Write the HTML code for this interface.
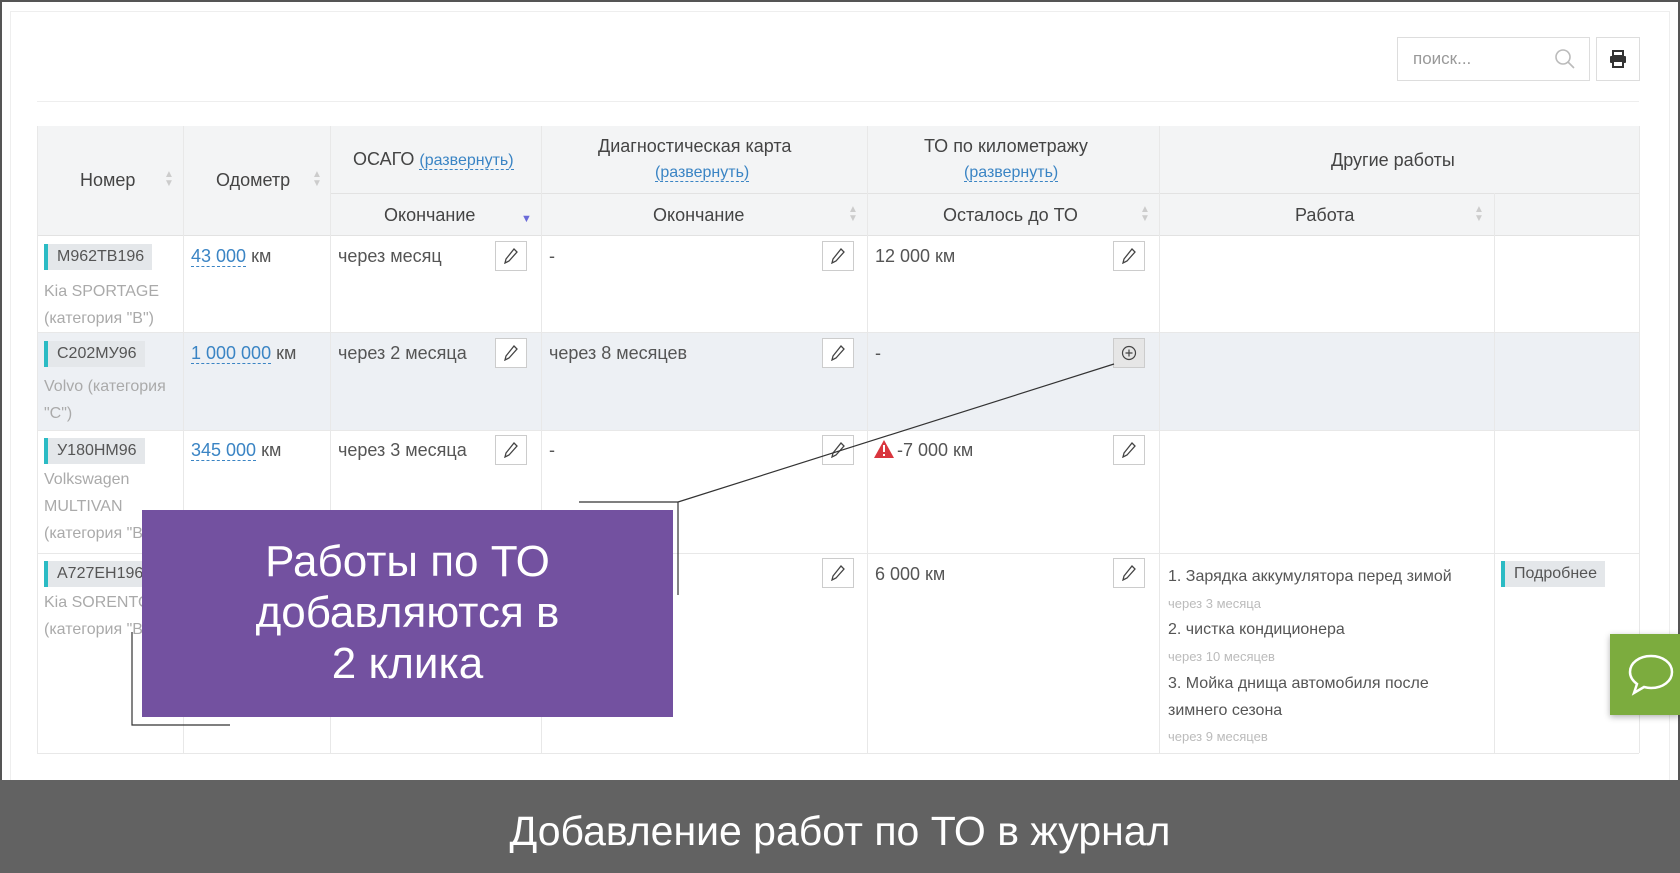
<!DOCTYPE html>
<html><head><meta charset="utf-8"><style>
*{margin:0;padding:0;box-sizing:border-box}
body{width:1680px;height:873px;position:relative;overflow:hidden;background:#fff;font-family:"Liberation Sans","DejaVu Sans",sans-serif;color:#555}
.a{position:absolute}
.frame{left:0;top:0;width:1680px;height:873px;border:2px solid #555;border-bottom:none}
.inner{left:10px;top:11px;width:1660px;height:770px;border:1px solid #eee}
.t{font-size:18px;white-space:nowrap}
.hd{background:#f3f4f5}
.vl{width:1px;background:#e8e8e8}
.hl{height:1px;background:#e8e8e8}
.lnk{color:#3a84c4;border-bottom:1px dashed #3a84c4}
.btn{width:32px;height:30px;border:1px solid #ccc;background:#fff;display:flex;align-items:center;justify-content:center}
.plate{height:26px;background:#e4e7ea;border-left:4px solid #2bbbc4;padding:0 8px 0 9px;line-height:26px;font-size:16px;color:#555}
.gr{color:#aaa;font-size:16px}
.sort{font-size:10px;color:#ccc;line-height:9px;text-align:center}
</style></head><body>
<div class="a frame"></div>
<div class="a inner"></div>
<div class="a" style="left:1397px;top:37px;width:193px;height:44px;border:1px solid #ddd"></div>
<div class="a t" style="left:1413px;top:49px;color:#999;font-size:17px">поиск...</div>
<svg class="a" style="left:1553px;top:47px" width="24" height="24" viewBox="0 0 24 24"><circle cx="10" cy="10" r="7" fill="none" stroke="#bbb" stroke-width="1.6"/><path d="M15 15l6 6" stroke="#bbb" stroke-width="1.6"/></svg>
<div class="a" style="left:1596px;top:37px;width:44px;height:44px;border:1px solid #ddd"></div>
<svg class="a" style="left:1609px;top:50px" width="18" height="18" viewBox="0 0 18 18"><rect x="4" y="1" width="10" height="5" fill="none" stroke="#333" stroke-width="2"/><rect x="1" y="6" width="16" height="7" rx="1" fill="#333"/><rect x="4" y="11" width="10" height="6" fill="#fff" stroke="#333" stroke-width="2"/></svg>
<div class="a hl" style="left:37px;top:101px;width:1602px;background:#eee"></div>
<div class="a hd" style="left:37px;top:126px;width:1602px;height:109px"></div>
<div class="a hl" style="left:330px;top:193px;width:1309px;background:#e2e2e2"></div>
<div class="a hl" style="left:37px;top:235px;width:1602px;background:#e2e2e2"></div>
<div class="a" style="left:37px;top:332px;width:1602px;height:98px;background:#edf0f4"></div>
<div class="a hl" style="left:37px;top:332px;width:1602px"></div>
<div class="a hl" style="left:37px;top:430px;width:1602px"></div>
<div class="a hl" style="left:37px;top:553px;width:1602px"></div>
<div class="a hl" style="left:37px;top:753px;width:1602px"></div>
<div class="a vl" style="left:37px;top:126px;height:627px"></div>
<div class="a vl" style="left:183px;top:126px;height:627px"></div>
<div class="a vl" style="left:330px;top:126px;height:627px"></div>
<div class="a vl" style="left:541px;top:126px;height:627px"></div>
<div class="a vl" style="left:867px;top:126px;height:627px"></div>
<div class="a vl" style="left:1159px;top:126px;height:627px"></div>
<div class="a vl" style="left:1494px;top:193px;height:560px"></div>
<div class="a vl" style="left:1639px;top:126px;height:627px"></div>
<div class="a t" style="left:80px;top:170px;color:#444">Номер</div>
<div class="a sort" style="left:164px;top:170px">▲<br>▼</div>
<div class="a t" style="left:216px;top:170px;color:#444">Одометр</div>
<div class="a sort" style="left:312px;top:170px">▲<br>▼</div>
<div class="a t" style="left:353px;top:149px;color:#444">ОСАГО <span class="lnk" style="font-size:16px">(развернуть)</span></div>
<div class="a t" style="left:598px;top:136px;color:#444">Диагностическая карта</div>
<div class="a t" style="left:655px;top:164px;font-size:16px"><span class="lnk">(развернуть)</span></div>
<div class="a t" style="left:924px;top:136px;color:#444">ТО по километражу</div>
<div class="a t" style="left:964px;top:164px;font-size:16px"><span class="lnk">(развернуть)</span></div>
<div class="a t" style="left:1331px;top:150px;color:#444">Другие работы</div>
<div class="a t" style="left:384px;top:205px;color:#444">Окончание</div>
<div class="a" style="left:521px;top:213px;color:#6a6ad8;font-size:11px">▼</div>
<div class="a t" style="left:653px;top:205px;color:#444">Окончание</div>
<div class="a sort" style="left:848px;top:205px">▲<br>▼</div>
<div class="a t" style="left:943px;top:205px;color:#444">Осталось до ТО</div>
<div class="a sort" style="left:1140px;top:205px">▲<br>▼</div>
<div class="a t" style="left:1295px;top:205px;color:#444">Работа</div>
<div class="a sort" style="left:1474px;top:205px">▲<br>▼</div>
<div class="a plate" style="left:44px;top:244px">М962ТВ196</div>
<div class="a gr" style="left:44px;top:278px;line-height:27px">Kia SPORTAGE<br>(категория "B")</div>
<div class="a t" style="left:191px;top:246px"><span class="lnk">43 000</span> км</div>
<div class="a t" style="left:338px;top:246px">через месяц</div>
<div class="a t" style="left:549px;top:246px">-</div>
<div class="a t" style="left:875px;top:246px">12 000 км</div>
<div class="a plate" style="left:44px;top:341px">С202МУ96</div>
<div class="a gr" style="left:44px;top:373px;line-height:27px">Volvo (категория<br>"C")</div>
<div class="a t" style="left:191px;top:343px"><span class="lnk">1 000 000</span> км</div>
<div class="a t" style="left:338px;top:343px">через 2 месяца</div>
<div class="a t" style="left:549px;top:343px">через 8 месяцев</div>
<div class="a t" style="left:875px;top:343px">-</div>
<div class="a plate" style="left:44px;top:438px">У180НМ96</div>
<div class="a gr" style="left:44px;top:466px;line-height:27px">Volkswagen<br>MULTIVAN<br>(категория "B")</div>
<div class="a t" style="left:191px;top:440px"><span class="lnk">345 000</span> км</div>
<div class="a t" style="left:338px;top:440px">через 3 месяца</div>
<div class="a t" style="left:549px;top:440px">-</div>
<svg class="a" style="left:874px;top:440px" width="20" height="18" viewBox="0 0 20 18"><path d="M10 0L20 18H0Z" fill="#d9363e"/><rect x="9" y="5" width="2" height="7" fill="#fff"/><rect x="9" y="14" width="2" height="2" fill="#fff"/></svg>
<div class="a t" style="left:897px;top:440px">-7 000 км</div>
<div class="a plate" style="left:44px;top:561px">А727ЕН196</div>
<div class="a gr" style="left:44px;top:589px;line-height:27px">Kia SORENTO<br>(категория "B")</div>
<div class="a t" style="left:875px;top:564px">6 000 км</div>
<div class="a" style="left:1168px;top:564px;font-size:16px;line-height:26.7px;color:#555">1. Зарядка аккумулятора перед зимой<br><span style="font-size:13px;color:#bbb">через 3 месяца</span><br>2. чистка кондиционера<br><span style="font-size:13px;color:#bbb">через 10 месяцев</span><br>3. Мойка днища автомобиля после<br>зимнего сезона<br><span style="font-size:13px;color:#bbb">через 9 месяцев</span></div>
<div class="a plate" style="left:1501px;top:561px">Подробнее</div>
<div class="a btn" style="left:495px;top:241px"><svg width="14" height="16" viewBox="0 0 14 16"><path d="M10 1l3 3-8 9-4 2 1-4z" fill="none" stroke="#444" stroke-width="1.3"/></svg></div>
<div class="a btn" style="left:822px;top:241px"><svg width="14" height="16" viewBox="0 0 14 16"><path d="M10 1l3 3-8 9-4 2 1-4z" fill="none" stroke="#444" stroke-width="1.3"/></svg></div>
<div class="a btn" style="left:1113px;top:241px"><svg width="14" height="16" viewBox="0 0 14 16"><path d="M10 1l3 3-8 9-4 2 1-4z" fill="none" stroke="#444" stroke-width="1.3"/></svg></div>
<div class="a btn" style="left:495px;top:338px"><svg width="14" height="16" viewBox="0 0 14 16"><path d="M10 1l3 3-8 9-4 2 1-4z" fill="none" stroke="#444" stroke-width="1.3"/></svg></div>
<div class="a btn" style="left:822px;top:338px"><svg width="14" height="16" viewBox="0 0 14 16"><path d="M10 1l3 3-8 9-4 2 1-4z" fill="none" stroke="#444" stroke-width="1.3"/></svg></div>
<div class="a btn" style="left:1113px;top:338px;background:#e6e6e6"><svg width="16" height="16" viewBox="0 0 16 16"><circle cx="8" cy="8" r="6.5" fill="none" stroke="#444" stroke-width="1.2"/><path d="M8 4.5v7M4.5 8h7" stroke="#444" stroke-width="1.2"/></svg></div>
<div class="a btn" style="left:495px;top:435px"><svg width="14" height="16" viewBox="0 0 14 16"><path d="M10 1l3 3-8 9-4 2 1-4z" fill="none" stroke="#444" stroke-width="1.3"/></svg></div>
<div class="a btn" style="left:822px;top:435px"><svg width="14" height="16" viewBox="0 0 14 16"><path d="M10 1l3 3-8 9-4 2 1-4z" fill="none" stroke="#444" stroke-width="1.3"/></svg></div>
<div class="a btn" style="left:1113px;top:435px"><svg width="14" height="16" viewBox="0 0 14 16"><path d="M10 1l3 3-8 9-4 2 1-4z" fill="none" stroke="#444" stroke-width="1.3"/></svg></div>
<div class="a btn" style="left:822px;top:558px"><svg width="14" height="16" viewBox="0 0 14 16"><path d="M10 1l3 3-8 9-4 2 1-4z" fill="none" stroke="#444" stroke-width="1.3"/></svg></div>
<div class="a btn" style="left:1113px;top:558px"><svg width="14" height="16" viewBox="0 0 14 16"><path d="M10 1l3 3-8 9-4 2 1-4z" fill="none" stroke="#444" stroke-width="1.3"/></svg></div>
<svg class="a" style="left:0;top:0" width="1680" height="873"><path d="M1114 364L678 502M579 502H678V595M132 632V725H230" fill="none" stroke="#333" stroke-width="1.2"/></svg>
<div class="a" style="left:142px;top:510px;width:531px;height:207px;background:#7351a0;color:#fff;font-size:44px;line-height:51px;text-align:center;padding-top:26px">Работы по ТО<br>добавляются в<br>2 клика</div>
<div class="a" style="left:1610px;top:634px;width:70px;height:81px;background:#7cac3e;box-shadow:0 2px 6px rgba(0,0,0,.3)"></div>
<svg class="a" style="left:1626px;top:652px" width="50" height="46" viewBox="0 0 50 46"><path d="M25 4C13 4 4 11 4 20c0 5 3 9 7 12l-3 9 10-6c2 .5 5 1 7 1 12 0 21-7 21-16S37 4 25 4z" fill="none" stroke="#fff" stroke-width="2.5"/></svg>
<div class="a" style="left:0;top:780px;width:1680px;height:93px;background:#626262"></div>
<div class="a" style="left:0;top:808px;width:1680px;text-align:center;color:#fff;font-size:41px">Добавление работ по ТО в журнал</div>
</body></html>
